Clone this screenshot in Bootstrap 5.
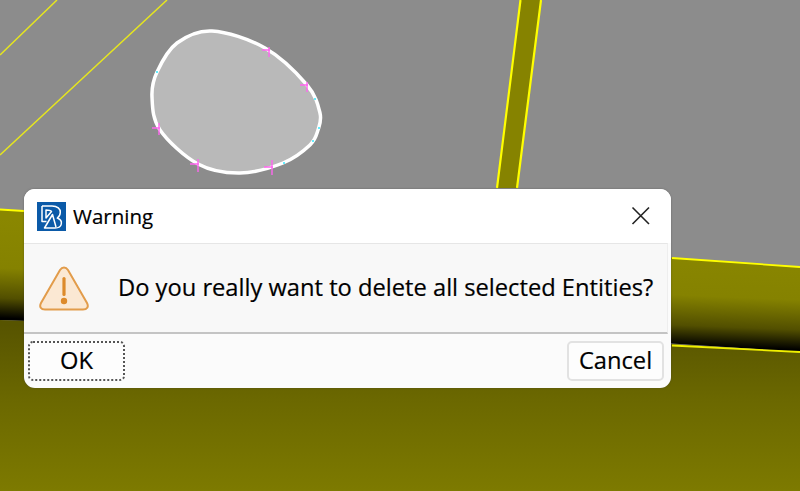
<!DOCTYPE html>
<html lang="en">
<head>
<meta charset="utf-8">
<title>Warning</title>
<link href="https://cdn.jsdelivr.net/npm/bootstrap@5.3.0/dist/css/bootstrap.min.css" rel="stylesheet">
<style>
html, body { margin: 0; height: 491px; overflow: hidden; background: #8c8c8c; }
.scene { position: absolute; inset: 0; width: 800px; height: 491px; display: block; }
.dlg {
  position: absolute; left: 24px; top: 189px; width: 647px; height: 199px;
  background: #fbfbfb; border-radius: 11px; overflow: hidden;
  font-family: "Open Sans", "Noto Sans", sans-serif; color: #000;
  -webkit-text-stroke: .2px #000;
  box-shadow: 0 0 2px rgba(60,60,60,.5);
}
.dlg-title { height: 54px; background: #fff; padding: 0 20px 0 13px; gap: 7px; }
.dlg-title-text { font-size: 20.5px; }
.dlg-x { width: 20px; height: 20px; padding: 0; border: 0; background: none; line-height: 0; }
.dlg-body { height: 91px; background: #f8f8f8; border-top: 1px solid #e6e6e6; border-right: 1px solid #eee; border-bottom: 2px solid #c4c4c4; margin-right: 3px; padding-left: 15px; gap: 29px; }
.dlg-msg { font-size: 23.7px; white-space: nowrap; }
.dlg-foot { padding: 7px 7px 0 4px; }
.dlg-btn { width: 97px; height: 40px; padding: 0; font-size: 23.7px; line-height: 1; color: #000; background: #fdfdfd; border-radius: 5px; font-family: inherit; }
.dlg-ok { border: 2px dotted #555; }
.dlg-cancel { border: 2px solid #e2e2e2; }
</style>
</head>
<body>
<svg class="scene" viewBox="0 0 800 491" xmlns="http://www.w3.org/2000/svg">
  <defs>
    <linearGradient id="bandGrad" gradientUnits="userSpaceOnUse" x1="404" y1="234" x2="400" y2="334">
      <stop offset="0" stop-color="#8a8700"/>
      <stop offset=".5" stop-color="#858200"/>
      <stop offset=".8" stop-color="#524f00"/>
      <stop offset="1" stop-color="#000"/>
    </linearGradient>
    <linearGradient id="lowGrad" gradientUnits="userSpaceOnUse" x1="400" y1="325" x2="400" y2="491">
      <stop offset="0" stop-color="#575400"/>
      <stop offset=".45" stop-color="#6b6800"/>
      <stop offset="1" stop-color="#7d7a00"/>
    </linearGradient>
  </defs>
  <rect width="800" height="491" fill="#8c8c8c"/>
  <g fill="none" stroke="#e6e61e" stroke-width="1.5">
    <path d="M0 55 L57 0"/>
    <path d="M0 155 L167 0"/>
  </g>
  <path d="M520.5 0 H541 L517 188 H497 Z" fill="#868300"/>
  <path d="M520.5 0 L497 188 M541 0 L517 188" stroke="#ffff00" stroke-width="2.2" fill="none"/>
  <path d="M0 209 L800 267 V352 L672 343.5 L0 320 Z" fill="url(#bandGrad)"/>
  <path d="M0 320 L672 344 L800 352 V491 H0 Z" fill="url(#lowGrad)"/>
  <path d="M0 209.5 L24 211 M672 258 L800 267" stroke="#ffff00" stroke-width="1.8" fill="none"/>
  <path d="M672 345.5 L800 352" stroke="#f0f000" stroke-width="1.8" fill="none"/>
  <path d="M212 31 C226.7 31.8 249.2 39 265 48 C280.8 57 297.8 74.2 307 85 C316.2 95.8 318.2 105.5 320 113 C321.8 120.5 319.7 124.7 318 130 C316.3 135.3 315.8 139.5 310 145 C304.2 150.5 294.7 158.3 283 163 C271.3 167.7 254.2 172.8 240 173 C225.8 173.2 211.3 171.2 198 164 C184.7 156.8 167.7 141.2 160 130 C152.3 118.8 152.5 106.7 152 97 C151.5 87.3 152.8 81 157 72 C161.2 63 167.8 49.8 177 43 C186.2 36.2 197.3 30.2 212 31 Z" fill="#b9b9b9" stroke="#fff" stroke-width="3.5"/>
  <g stroke="#ff66f0" stroke-width="1.4" fill="none">
    <path d="M262 50 H270 M269 47 V57"/>
    <path d="M300 85 H308 M307 82 V92"/>
    <path d="M152 128 H160 M159 123 V135"/>
    <path d="M190 164 H199 M198 159 V172"/>
    <path d="M264 167 H273 M272 160 V175"/>
  </g>
  <g fill="#66eeff">
    <rect x="156" y="71" width="2" height="2"/>
    <rect x="314" y="98" width="2" height="2"/>
    <rect x="318" y="127" width="2" height="2"/>
    <rect x="312" y="140" width="2" height="2"/>
    <rect x="283" y="162" width="2" height="2"/>
  </g>
</svg>

<div class="dlg">
  <div class="dlg-title d-flex align-items-center">
    <svg width="29" height="29" viewBox="0 0 29 29" xmlns="http://www.w3.org/2000/svg" aria-hidden="true">
      <rect width="29" height="29" fill="#0b5aa8"/>
      <g fill="none" stroke="#fff" stroke-width="1.5" stroke-linejoin="round">
        <path d="M5 4 H15 C20.5 4 23.5 7 23.3 10.5 C23.1 13.5 21.8 15 20.3 16 C23 17 24.8 19.5 24.3 22 C23.8 25 21 26 18 26 H7.5 L15.5 12.5 L19 25"/>
        <path d="M5 4 V19.5 H9.5"/>
        <path d="M9 8 V16 L14.5 9.5 C13.5 8.3 11.5 8 9 8 Z"/>
      </g>
    </svg>
    <span class="dlg-title-text">Warning</span>
    <button type="button" class="dlg-x ms-auto" aria-label="Close">
      <svg width="20" height="20" viewBox="0 0 20 20" xmlns="http://www.w3.org/2000/svg"><path d="M1.5 1.5 L18 18 M18 1.5 L1.5 18" stroke="#222" stroke-width="1.6" fill="none"/></svg>
    </button>
  </div>
  <div class="dlg-body d-flex align-items-center">
    <svg width="50" height="45" viewBox="0 0 50 45" xmlns="http://www.w3.org/2000/svg" aria-hidden="true">
      <path d="M25 1.5 C27 1.5 28 2.5 29 4 L48 37 C50 41 48 43.5 44 43.5 H6 C2 43.5 0 41 2 37 L21 4 C22 2.5 23 1.5 25 1.5 Z" fill="#fbe8d3" stroke="#e29c4b" stroke-width="2"/>
      <rect x="23.4" y="11" width="3.2" height="19" rx="1.6" fill="#dd8a2b"/>
      <circle cx="25" cy="35" r="3.2" fill="#dd8a2b"/>
    </svg>
    <span class="dlg-msg">Do you really want to delete all selected Entities?</span>
  </div>
  <div class="dlg-foot d-flex justify-content-between">
    <button type="button" class="btn dlg-btn dlg-ok">OK</button>
    <button type="button" class="btn dlg-btn dlg-cancel">Cancel</button>
  </div>
</div>
</body>
</html>
